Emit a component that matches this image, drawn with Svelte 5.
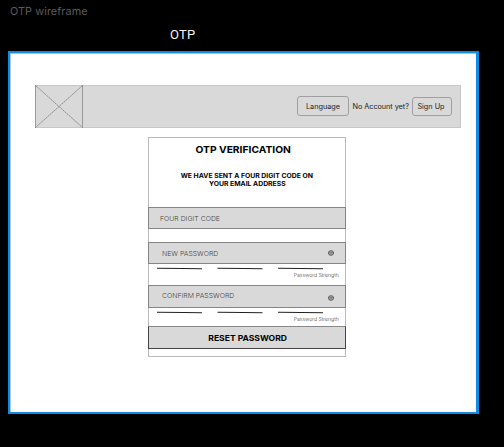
<script>
  const fields = [
    { label: 'NEW PASSWORD', kind: 'new' },
    { label: 'CONFIRM PASSWORD', kind: 'confirm' }
  ];
</script>

<main>
  <div class="file">OTP wireframe</div>
  <div class="tab">OTP</div>
  <section class="frame">
    <header>
      <svg class="logo" width="48" height="43" viewBox="0 0 48 43">
        <path class="edge" d="M.5 0V43M47.500 0V43" />
        <path d="M.5 .5L47.5 42.5M47.5 .5L.5 42.5" />
      </svg>
      <button class="lang">Language</button>
      <span class="ask">No Account yet?</span>
      <button class="sign">Sign Up</button>
    </header>
    <div class="card">
      <h1><span>OTP VERIFICATION</span></h1>
      <p class="sub"><span>WE HAVE SENT A FOUR DIGIT CODE ON</span><span>YOUR EMAIL ADDRESS</span></p>
      <div class="field code"><span>FOUR DIGIT CODE</span></div>
      {#each fields as f}
        <div class="field {f.kind}">
          <span>{f.label}</span>
          <svg class="eye" width="8" height="8" viewBox="0 0 8 8">
            <ellipse cx="4" cy="4" rx="2.6" ry="2.3" />
            <path d="M2.2 3.7Q4 2.7 5.800 3.700M2.800 4.300L3.700 5.100L5.200 4.200" />
          </svg>
        </div>
        <div class="meter {f.kind}">
          <svg width="196" height="4" viewBox="0 0 196 4">
            <path d="M8 1.3L35 1.5L53 1.800M68.500 1.300L95 1.500L113.500 1.800M129 1.300L152 1.500L174 1.800" />
          </svg>
          <span>Password Strength</span>
        </div>
      {/each}
      <button class="reset"><span>RESET PASSWORD</span></button>
    </div>
  </section>
</main>

<style>
  :global(body) { background: #000; }
  main {
    width: 504px; height: 447px; background: #000; overflow: hidden;
    font-family: Inter, sans-serif; box-sizing: border-box; padding-top: 4px;
  }
  span { white-space: nowrap; display: inline-block; }
  button { font-family: inherit; margin: 0; padding: 0; color: #222; box-sizing: border-box; }
  .file { height: 16px; line-height: 16px; padding-left: 10px; font-size: 10.8px; color: #5b5b5b; letter-spacing: .1px; }
  .tab { height: 31px; line-height: 29px; padding-left: 170px; font-family: Roboto, sans-serif; font-size: 13px; letter-spacing: .25px; color: #f5f5f5; }
  .frame {
    box-sizing: border-box; width: 471px; height: 363px; margin-left: 8px;
    background: #fff; border: 2px solid #118ae2; border-right-width: 3px;
    box-shadow: inset 1px 1px #a5c8e4; padding: 32px 0 0 25px;
  }
  header {
    box-sizing: border-box; width: 426px; height: 43px; display: flex; align-items: center;
    background: #d9d9d9; box-shadow: inset 0 0 0 1px #c8c8c8; padding-right: 9px;
    font-size: 7.3px; color: #222;
  }
  .logo { fill: none; margin-right: auto; }
  .logo path { stroke: #777; stroke-width: .8; stroke-dasharray: 2 .6; }
  .logo .edge { stroke: #999; stroke-width: 1; stroke-dasharray: none; }
  header button { background: #d9d9d9; border: 1px solid #a0a0a0; border-radius: 3px; font-size: 7.3px; }
  .lang { width: 52px; height: 20px; margin-bottom: 1px; }
  .ask { margin: 0 3px 0 3.5px; width: 56.500px; letter-spacing: -.05px; }
  .sign { width: 40px; height: 19px; padding-right: 2px; }
  .card {
    box-sizing: border-box; width: 198px; height: 220px; margin: 9px 0 0 113px;
    border: 1px solid #bababa; color: #000;
  }
  h1 { margin: 0; height: 34px; padding: 5px 7px 0 0; box-sizing: border-box; font-size: 9.5px; line-height: 13px; font-weight: 700; text-align: center; }
  h1 span { transform: scaleX(1.08); }
  .sub { margin: 0; height: 35px; box-sizing: border-box; display: flex; flex-direction: column; align-items: center; font-size: 6.300px; line-height: 8px; font-weight: 700; }
  .sub span { height: 8px; transform: scaleX(1.087); }
  .field {
    box-sizing: border-box; height: 22px; margin: 0 -1px; padding: 0 10px 0 12.5px;
    display: flex; align-items: center; justify-content: space-between;
    background: #d9d9d9; border: 1px solid #858585; color: #444;
    font-size: 6.600px; font-weight: 300;
  }
  .field span { transform: scaleX(1.045); transform-origin: left; margin-top: 2px; }
  .field.code { margin-bottom: 13px; padding-left: 10.500px; }
  .field.confirm { height: 23px; }
  .field.confirm span { margin: 0 0 2px; }
  .confirm .eye { margin-top: 2px; }
  .eye { fill: #b5b5b5; stroke: #555; stroke-width: .9; }
  .eye path { fill: none; stroke-width: .6; }
  .meter { height: 21px; padding-top: 3px; box-sizing: border-box; display: flex; flex-direction: column; }
  .meter.confirm { height: 18px; }
  .meter svg { display: block; fill: none; stroke: #222; stroke-width: 1.1; }
  .meter span { align-self: flex-end; margin-right: 6px; line-height: 8px; font-size: 5px; font-weight: 300; color: #444; transform: scaleX(1.03); transform-origin: right; }
  .reset { display: block; width: 198px; height: 23px; margin-left: -1px; background: #d9d9d9; border: 1px solid #444; border-top-color: #888; font-size: 8.200px; line-height: 13px; padding: 2px 0 0 2px; font-weight: 700; color: #000; }
  .reset span { transform: scaleX(1.045); }
</style>
